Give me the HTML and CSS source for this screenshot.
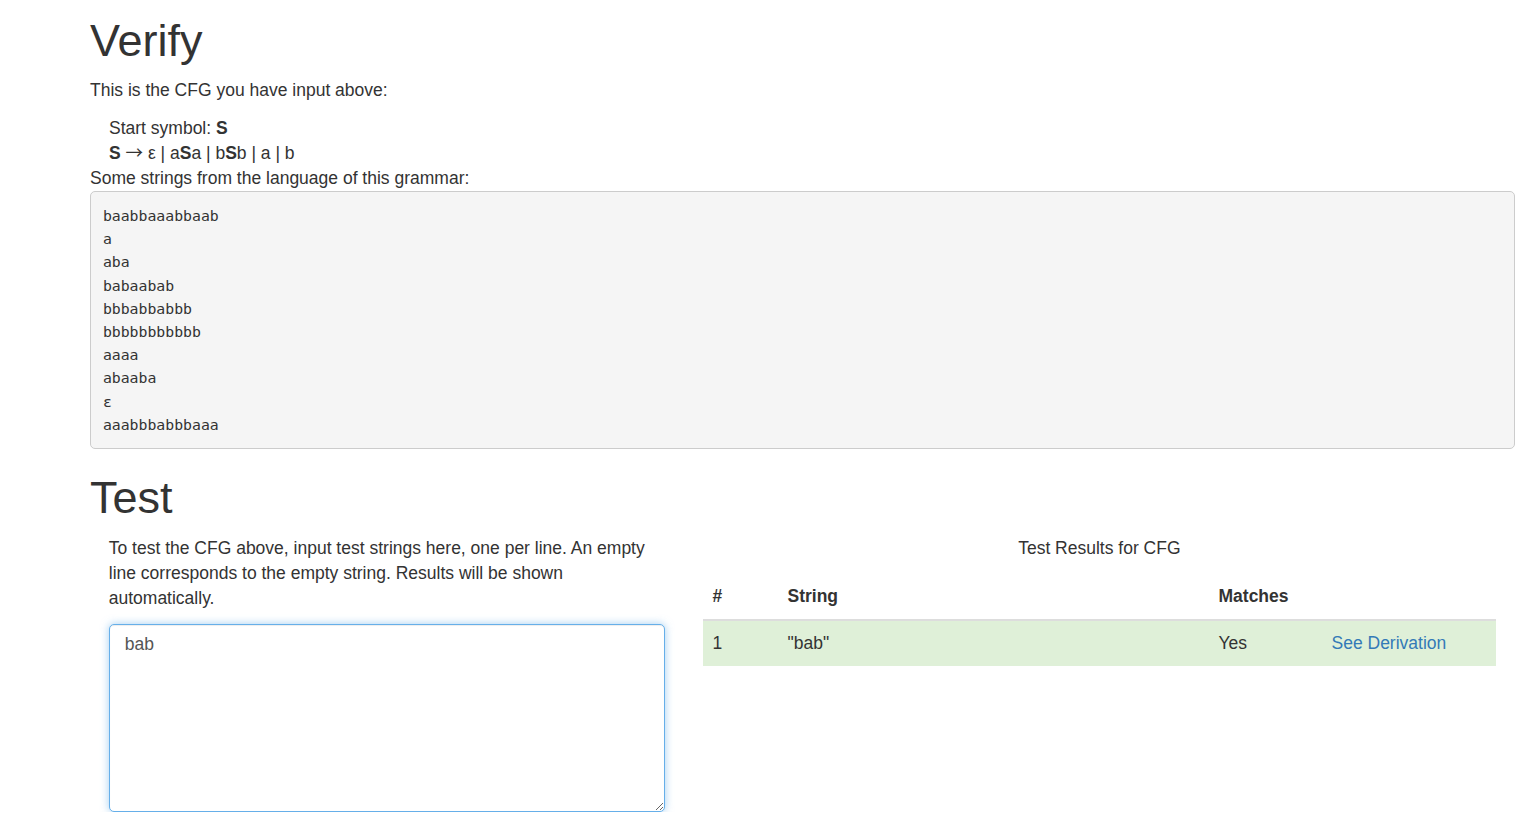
FILE: index.html
```html
<!DOCTYPE html>
<html lang="en">
<head>
<meta charset="utf-8">
<title>Verify CFG</title>
<link rel="stylesheet" href="styles.css">
</head>
<body>
<div class="page">
  <h1 class="title">Verify</h1>
  <p class="intro">This is the CFG you have input above:</p>
  <div class="grammar">
    <div>Start symbol: <b>S</b></div>
    <div><b>S</b> <span class="arrow">→</span> ε | a<b>S</b>a | b<b>S</b>b | a | b</div>
  </div>
  <div class="label">Some strings from the language of this grammar:</div>
  <pre class="samples">baabbaaabbaab
a
aba
babaabab
bbbabbabbb
bbbbbbbbbbb
aaaa
abaaba
ε
aaabbbabbbaaa</pre>

  <h1 class="title test-title">Test</h1>
  <div class="row">
    <div class="col-left">
      <p class="help">To test the CFG above, input test strings here, one per line. An empty line corresponds to the empty string. Results will be shown automatically.</p>
      <textarea class="input" spellcheck="false">bab</textarea>
    </div>
    <div class="col-right">
      <table class="results">
        <caption>Test Results for CFG</caption>
        <thead>
          <tr>
            <th class="c-num">#</th>
            <th class="c-str">String</th>
            <th class="c-match">Matches</th>
            <th class="c-deriv"></th>
          </tr>
        </thead>
        <tbody>
          <tr class="success">
            <td>1</td>
            <td>"bab"</td>
            <td>Yes</td>
            <td><a href="#">See Derivation</a></td>
          </tr>
        </tbody>
      </table>
    </div>
  </div>
</div>
</body>
</html>
```
FILE: styles.css
```css
html, body {
  margin: 0;
  padding: 0;
  background: #fff;
}
body {
  font-family: "Liberation Sans", Arial, Helvetica, sans-serif;
  font-size: 17.5px;
  line-height: 25px;
  color: #333;
}
.page {
  padding: 0 13px 0 90px;
}
.title {
  font-family: "Liberation Sans", Arial, Helvetica, sans-serif;
  font-weight: 500;
  font-size: 45px;
  line-height: 49.5px;
  margin: 16px 0 12.5px;
  color: #333;
}
.intro {
  margin: 0 0 12.5px;
}
.grammar {
  padding-left: 19px;
}
.grammar b {
  font-weight: bold;
}
.arrow {
  font-family: "Noto Sans CJK JP", "DejaVu Sans", sans-serif;
  font-size: 17.5px;
  line-height: 0;
}
.label {
  margin: 0;
}
.samples {
  margin: 0.5px 0 0;
  padding: 11.9px;
  background: #f5f5f5;
  border: 1px solid #ccc;
  border-radius: 5px;
  font-family: "DejaVu Sans Mono", "Liberation Mono", monospace;
  font-size: 14.8px;
  line-height: 23.2px;
  color: #333;
  white-space: pre;
}
.test-title {
  margin-top: 24px;
  margin-bottom: 14px;
}
.row {
  display: flex;
}
.col-left {
  box-sizing: border-box;
  width: 41.6667%;
  padding: 0 18.75px;
}
.col-right {
  box-sizing: border-box;
  width: 58.3333%;
  padding: 0 18.75px;
}
.help {
  margin: 0 0 12.5px;
}
.input {
  display: block;
  box-sizing: border-box;
  width: 100%;
  height: 188px;
  margin: 0;
  padding: 7.5px 15px;
  font-family: "Liberation Sans", Arial, Helvetica, sans-serif;
  font-size: 17.5px;
  line-height: 25px;
  color: #555;
  background: #fff;
  border: 1px solid #66afe9;
  border-radius: 5px;
  outline: 0;
  box-shadow: inset 0 1px 1px rgba(0,0,0,.075), 0 0 8px rgba(102,175,233,.6);
  resize: both;
}
.results {
  width: 100%;
  border-collapse: collapse;
  border-spacing: 0;
  table-layout: fixed;
}
.results caption {
  padding: 0 0 13px;
  text-align: center;
  color: #333;
}
.results th,
.results td {
  padding: 10px;
  text-align: left;
  line-height: 25px;
  white-space: nowrap;
}
.results th {
  font-weight: bold;
  vertical-align: bottom;
  border-bottom: 2px solid #ddd;
}
.results td {
  vertical-align: top;
  border-top: 1px solid #ddd;
}
.results .success td {
  background: #dff0d8;
}
.c-num { width: 55px; }
.c-str { width: 411px; }
.c-match { width: 93px; }
.results a {
  color: #337ab7;
  text-decoration: none;
}
```
